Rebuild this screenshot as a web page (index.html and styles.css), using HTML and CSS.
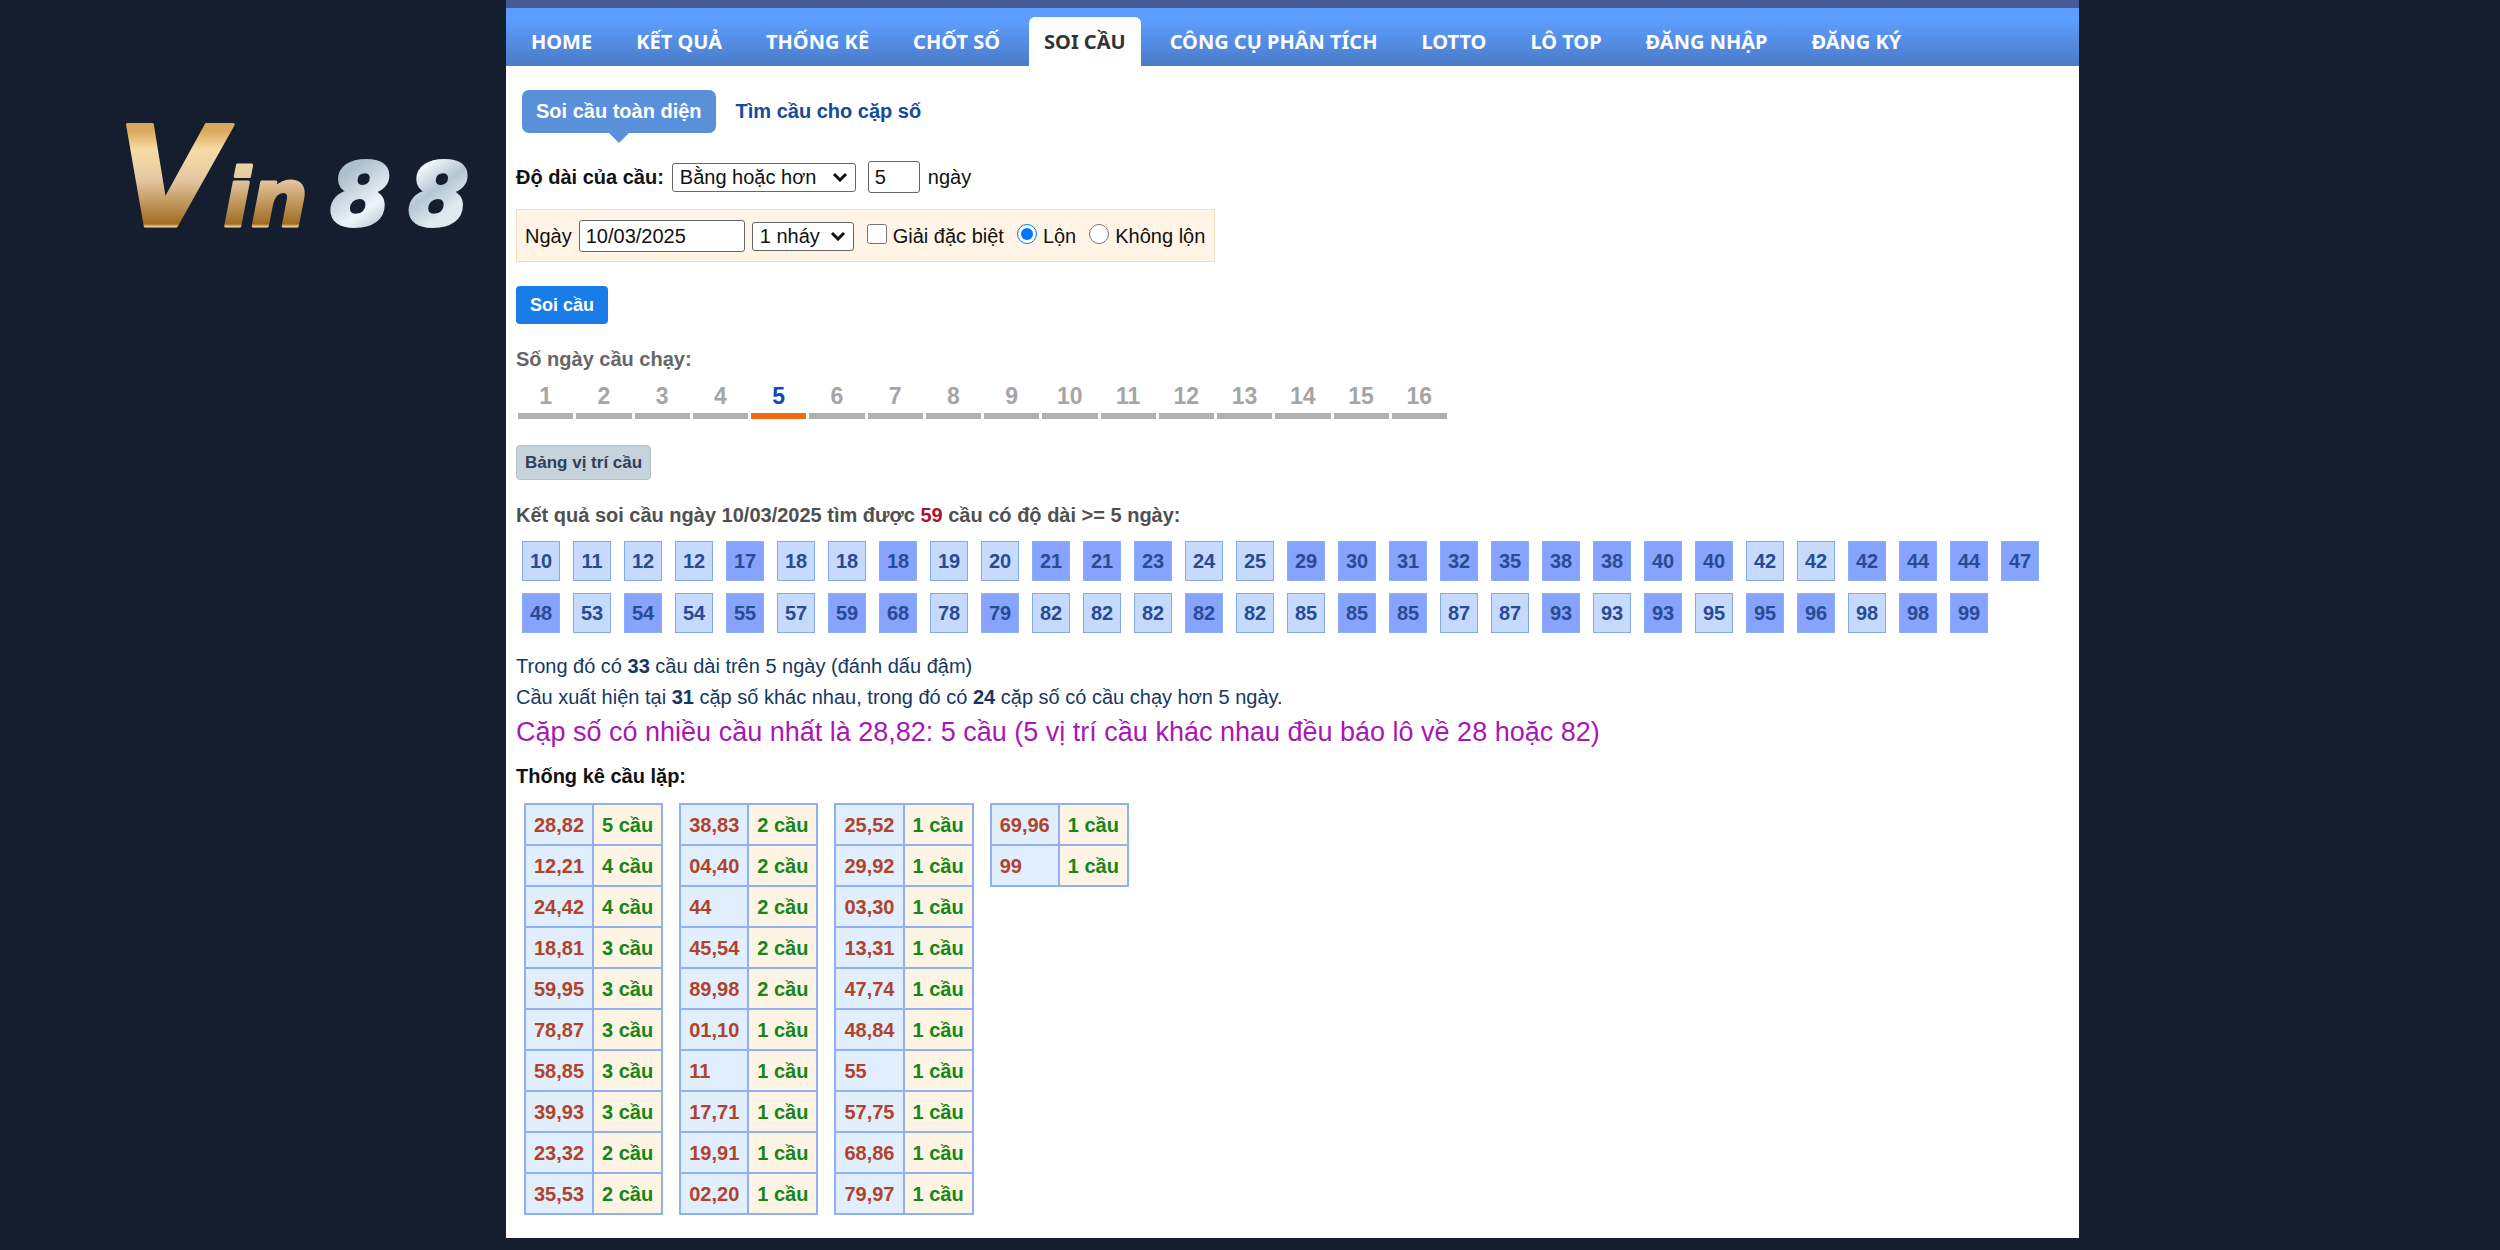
FILE: index.html
```html
<!DOCTYPE html>
<html lang="vi">
<head>
<meta charset="utf-8">
<title>Soi cầu</title>
<link rel="stylesheet" href="styles.css">
</head>
<body>
<header class="brand">
  <svg class="logo" viewBox="0 0 360 110" role="img" aria-label="Vin88">
    <defs>
      <linearGradient id="gold" x1="0" y1="0" x2="0" y2="1">
        <stop offset="0.2" stop-color="#d9a95c"/>
        <stop offset="0.32" stop-color="#f6dca6"/>
        <stop offset="0.5" stop-color="#e6c9a2"/>
        <stop offset="0.78" stop-color="#a06c22"/>
        <stop offset="0.8" stop-color="#f3d9a0"/>
      </linearGradient>
      <linearGradient id="silver" x1="0" y1="0" x2="1" y2="1">
        <stop offset="0.2" stop-color="#aebfcc"/>
        <stop offset="0.45" stop-color="#eef4fa"/>
        <stop offset="0.6" stop-color="#b4c6d3"/>
        <stop offset="0.75" stop-color="#dfe9f0"/>
      </linearGradient>
    </defs>
    <text class="logo-gold" y="103"><tspan class="logo-v" x="-8">V</tspan><tspan class="logo-in" x="98">in</tspan></text>
    <text class="logo-num" y="102"><tspan x="205">8</tspan><tspan x="283">8</tspan></text>
  </svg>
</header>

<main class="panel">
  <nav class="nav">
    <a href="#">HOME</a>
    <a href="#">KẾT QUẢ</a>
    <a href="#">THỐNG KÊ</a>
    <a href="#">CHỐT SỐ</a>
    <a href="#" class="active">SOI CẦU</a>
    <a href="#">CÔNG CỤ PHÂN TÍCH</a>
    <a href="#">LOTTO</a>
    <a href="#">LÔ TOP</a>
    <a href="#">ĐĂNG NHẬP</a>
    <a href="#">ĐĂNG KÝ</a>
  </nav>

  <div class="content">
    <div class="subtabs">
      <a href="#" class="subtab current">Soi cầu toàn diện</a>
      <a href="#" class="subtab">Tìm cầu cho cặp số</a>
    </div>

    <form class="form">
      <div class="row">
        <label class="strong" for="mode">Độ dài của cầu:</label>
        <select id="mode" class="mode"><option>Bằng hoặc hơn</option></select>
        <input id="length" class="length" type="text" value="5">
        <label for="length">ngày</label>
      </div>
      <div class="row filter">
        <label for="date">Ngày</label>
        <input id="date" class="date" type="text" value="10/03/2025">
        <select class="hits" aria-label="Số nháy"><option>1 nháy</option></select>
        <label class="choice"><input type="checkbox">Giải đặc biệt</label>
        <label class="choice"><input type="radio" name="rev" checked>Lộn</label>
        <label class="choice"><input type="radio" name="rev">Không lộn</label>
      </div>
      <button type="button" class="submit">Soi cầu</button>
    </form>

    <h2 class="days-title">Số ngày cầu chạy:</h2>
    <div class="days">
      <a href="#">1</a><a href="#">2</a><a href="#">3</a><a href="#">4</a><a href="#" class="on">5</a><a href="#">6</a><a href="#">7</a><a href="#">8</a><a href="#">9</a><a href="#">10</a><a href="#">11</a><a href="#">12</a><a href="#">13</a><a href="#">14</a><a href="#">15</a><a href="#">16</a>
    </div>

    <button type="button" class="positions">Bảng vị trí cầu</button>

    <p class="result">Kết quả soi cầu ngày 10/03/2025 tìm được <span class="count">59</span> cầu có độ dài &gt;= 5 ngày:</p>

    <div class="chips">
      <a href="#">10</a><a href="#">11</a><a href="#">12</a><a href="#">12</a><a href="#" class="d">17</a><a href="#">18</a><a href="#">18</a><a href="#" class="d">18</a><a href="#">19</a><a href="#">20</a><a href="#" class="d">21</a><a href="#" class="d">21</a><a href="#" class="d">23</a><a href="#">24</a><a href="#">25</a><a href="#" class="d">29</a><a href="#" class="d">30</a><a href="#" class="d">31</a><a href="#" class="d">32</a><a href="#" class="d">35</a><a href="#" class="d">38</a><a href="#" class="d">38</a><a href="#" class="d">40</a><a href="#" class="d">40</a><a href="#">42</a><a href="#">42</a><a href="#" class="d">42</a><a href="#" class="d">44</a><a href="#" class="d">44</a><a href="#" class="d">47</a>
      <a href="#" class="d">48</a><a href="#">53</a><a href="#" class="d">54</a><a href="#">54</a><a href="#" class="d">55</a><a href="#">57</a><a href="#" class="d">59</a><a href="#" class="d">68</a><a href="#">78</a><a href="#" class="d">79</a><a href="#">82</a><a href="#">82</a><a href="#">82</a><a href="#" class="d">82</a><a href="#">82</a><a href="#">85</a><a href="#" class="d">85</a><a href="#" class="d">85</a><a href="#">87</a><a href="#">87</a><a href="#" class="d">93</a><a href="#">93</a><a href="#" class="d">93</a><a href="#">95</a><a href="#" class="d">95</a><a href="#" class="d">96</a><a href="#">98</a><a href="#" class="d">98</a><a href="#" class="d">99</a>
    </div>

    <p class="note">Trong đó có <b>33</b> cầu dài trên 5 ngày (đánh dấu đậm)</p>
    <p class="note">Cầu xuất hiện tại <b>31</b> cặp số khác nhau, trong đó có <b>24</b> cặp số có cầu chạy hơn 5 ngày.</p>
    <p class="most">Cặp số có nhiều cầu nhất là 28,82: 5 cầu (5 vị trí cầu khác nhau đều báo lô về 28 hoặc 82)</p>

    <h2 class="stats-title">Thống kê cầu lặp:</h2>
    <div class="stats">
      <table>
        <tr><td>28,82</td><td>5 cầu</td></tr>
        <tr><td>12,21</td><td>4 cầu</td></tr>
        <tr><td>24,42</td><td>4 cầu</td></tr>
        <tr><td>18,81</td><td>3 cầu</td></tr>
        <tr><td>59,95</td><td>3 cầu</td></tr>
        <tr><td>78,87</td><td>3 cầu</td></tr>
        <tr><td>58,85</td><td>3 cầu</td></tr>
        <tr><td>39,93</td><td>3 cầu</td></tr>
        <tr><td>23,32</td><td>2 cầu</td></tr>
        <tr><td>35,53</td><td>2 cầu</td></tr>
      </table>
      <table>
        <tr><td>38,83</td><td>2 cầu</td></tr>
        <tr><td>04,40</td><td>2 cầu</td></tr>
        <tr><td>44</td><td>2 cầu</td></tr>
        <tr><td>45,54</td><td>2 cầu</td></tr>
        <tr><td>89,98</td><td>2 cầu</td></tr>
        <tr><td>01,10</td><td>1 cầu</td></tr>
        <tr><td>11</td><td>1 cầu</td></tr>
        <tr><td>17,71</td><td>1 cầu</td></tr>
        <tr><td>19,91</td><td>1 cầu</td></tr>
        <tr><td>02,20</td><td>1 cầu</td></tr>
      </table>
      <table>
        <tr><td>25,52</td><td>1 cầu</td></tr>
        <tr><td>29,92</td><td>1 cầu</td></tr>
        <tr><td>03,30</td><td>1 cầu</td></tr>
        <tr><td>13,31</td><td>1 cầu</td></tr>
        <tr><td>47,74</td><td>1 cầu</td></tr>
        <tr><td>48,84</td><td>1 cầu</td></tr>
        <tr><td>55</td><td>1 cầu</td></tr>
        <tr><td>57,75</td><td>1 cầu</td></tr>
        <tr><td>68,86</td><td>1 cầu</td></tr>
        <tr><td>79,97</td><td>1 cầu</td></tr>
      </table>
      <table>
        <tr><td>69,96</td><td>1 cầu</td></tr>
        <tr><td>99</td><td>1 cầu</td></tr>
      </table>
    </div>
  </div>
</main>
</body>
</html>
```
FILE: styles.css
```css
* { box-sizing: border-box; }

body {
  margin: 0;
  min-height: 100vh;
  display: grid;
  grid-template-columns: 506fr 1573fr 421fr;
  align-items: start;
  background: #141e2e;
  color: #111;
  font: 20px/32px "Liberation Sans", Arial, sans-serif;
}

a { text-decoration: none; }
h2, p { margin: 0; font-size: 20px; }

.brand { padding: 123px 20px 0 125px; }
.logo { display: block; width: 100%; overflow: visible; }
.logo text {
  font-family: "DejaVu Sans", sans-serif;
  font-weight: bold;
  font-style: oblique;
  stroke-linejoin: round;
}
.logo-gold { fill: url(#gold); stroke: url(#gold); stroke-width: 3px; }
.logo-v { font-size: 138px; }
.logo-in { font-size: 80px; }
.logo-num { font-size: 86px; fill: url(#silver); stroke: url(#silver); stroke-width: 4px; }

.panel { min-width: 0; background: #fff; border-top: 8px solid #465a96; }

.nav {
  display: flex;
  align-items: flex-end;
  height: 58px;
  padding-left: 10px;
  gap: 14px;
  background: linear-gradient(#5c9eff 20%, #4a7bc6);
}
.nav a {
  padding: 0 15px;
  border-radius: 6px 6px 0 0;
  color: #fff;
  font: bold 20px/49px "Noto Sans", sans-serif;
  white-space: nowrap;
}
.nav .active { background: #fff; color: #333; }

.content { padding: 24px 10px 23px; }

.subtabs { display: flex; gap: 6px; margin-left: 6px; }
.subtab {
  padding: 0 14px;
  border-radius: 7px;
  color: #164a9c;
  font-weight: bold;
  line-height: 43px;
}
.subtab.current { position: relative; background: #5a8fda; color: #fff; }
.subtab.current::after {
  content: "";
  position: absolute;
  top: 100%;
  left: 50%;
  margin-left: -10px;
  border: 10px solid transparent;
  border-top-color: #5a8fda;
  border-bottom: 0;
}

.form { display: flex; flex-direction: column; align-items: flex-start; margin-top: 28px; }
.row { display: flex; align-items: center; gap: 8px; }
.strong { font-weight: bold; }
input, select, button { font: inherit; }
input[type="text"], select {
  border: 1px solid #666;
  border-radius: 3px;
  background-color: #fff;
  color: #111;
}
input[type="text"] { height: 32px; padding: 0 6px; }
select {
  height: 29px;
  padding: 0 7px;
  line-height: 27px;
  appearance: none;
  background-image: url("data:image/svg+xml,%3Csvg xmlns='http://www.w3.org/2000/svg' viewBox='0 0 16 10'%3E%3Cpath d='M2 2l6 6 6-6' fill='none' stroke='%23111' stroke-width='3'/%3E%3C/svg%3E");
  background-repeat: no-repeat;
  background-position: right 7px center;
  background-size: 16px 10px;
}
.mode { width: 184px; }
.length { width: 52px; margin-left: 4px; }
.date { width: 166px; }
.hits { width: 102px; }
.filter {
  gap: 7px;
  margin: 16px 0 24px;
  padding: 10px 9px 9px 8px;
  border: 1px solid #f0dfc4;
  background: #fff4e5;
}
.choice { display: flex; align-items: center; gap: 6px; margin-left: 6px; }
.choice input { width: 20px; height: 20px; margin: 0 0 4px; }
.submit {
  height: 38px;
  padding: 0 14px;
  border: 0;
  border-radius: 4px;
  background: #1a7ce8;
  color: #fff;
  font-weight: bold;
  font-size: 18px;
}

.days-title { margin-top: 19px; color: #666; }
.days {
  display: grid;
  grid-template-columns: repeat(16, 1fr);
  gap: 3px;
  max-width: 929px;
  margin: 5px 0 26px 2px;
}
.days a {
  padding-bottom: 1px;
  border-bottom: 6px solid #b0b0b0;
  color: #a5a5a5;
  font-size: 23px;
  font-weight: bold;
  text-align: center;
}
.days .on { border-color: #f26a11; color: #0d4bb5; }

.positions {
  display: block;
  height: 35px;
  padding: 0 8px;
  border: 1px solid #b3c2cd;
  border-radius: 4px;
  background: #c6d2dc;
  color: #2e4057;
  font-size: 17px;
  font-weight: bold;
}

.result { margin-top: 19px; color: #505050; font-weight: bold; }
.count { color: #a8132c; }

.chips { display: flex; flex-wrap: wrap; gap: 12px 13px; margin: 10px 0 18px 6px; }
.chips a {
  width: 38px;
  border: 1px solid #82a9ea;
  background: #c5dafd;
  color: #294b94;
  font-weight: bold;
  line-height: 38px;
  text-align: center;
}
.chips .d { border-color: #8aaefc; background: #86a3fe; }

.note { color: #16375f; line-height: 31px; }
.most { margin-top: 1px; color: #a817b4; font-size: 27px; line-height: 36px; }

.stats-title { margin: 10px 0 11px; }
.stats { display: flex; align-items: flex-start; gap: 16px; margin-left: 8px; }
table { border-collapse: collapse; }
td {
  height: 41px;
  padding: 0 8px;
  border: 2px solid #8fb1f1;
  background: #fdf4e3;
  color: #16851a;
  font-weight: bold;
}
td:first-child { background: #e1eefd; color: #b0432a; }
```
